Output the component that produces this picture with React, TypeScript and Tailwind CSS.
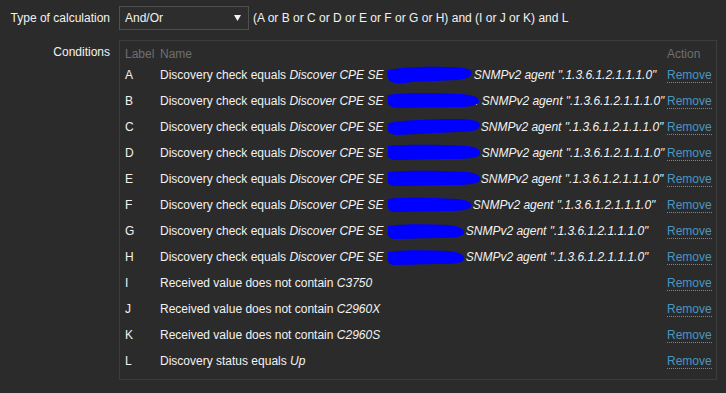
import React from "react";

type Row = {
  l: string;
  pre: string;
  it: string;
  blob?: { w: string; svgW: number; d: string };
  postIt?: string;
};

const blobA = "M1,5 C14,2 40,1 60,2 C72,2 82,3 84,6 C86,10 82,14 70,15 C55,16 40,16 25,17 C15,19 6,19 3,16 C0,13 0,8 1,5 Z";
const blobB = "M1,4 C20,1 50,2 75,3 C86,4 92,6 92,10 C92,14 84,16 70,16 C50,16 30,17 12,17 C4,17 0,14 1,10 C1,8 0,6 1,4 Z";
const blobC = "M2,6 C15,3 45,2 70,2 C85,2 93,4 93,8 C93,13 85,15 70,15 C50,16 30,17 10,18 C3,18 0,14 1,11 C1,9 1,7 2,6 Z";
const blobD = "M1,3 C25,1 55,2 80,3 C90,4 94,7 93,11 C92,15 82,16 65,16 C45,16 25,17 8,17 C3,17 0,14 1,10 Z";
const blobF = "M1,4 C18,2 45,3 70,4 C80,5 85,7 84,11 C83,15 74,16 60,16 C42,16 24,17 8,17 C2,17 0,13 1,9 Z";
const blobG = "M1,5 C15,3 40,3 62,4 C72,5 78,8 77,12 C76,16 68,17 55,17 C38,17 20,18 7,18 C2,18 0,14 1,10 Z";

const snmp = "SNMPv2 agent \".1.3.6.1.2.1.1.1.0\"";

const rows: Row[] = [
  { l: "A", pre: "Discovery check equals ", it: "Discover CPE SE ", blob: { w: "w-[87px]", svgW: 87, d: blobA }, postIt: snmp },
  { l: "B", pre: "Discovery check equals ", it: "Discover CPE SE ", blob: { w: "w-[85px]", svgW: 94, d: blobB }, postIt: ".. " + snmp },
  { l: "C", pre: "Discovery check equals ", it: "Discover CPE SE ", blob: { w: "w-[94px]", svgW: 94, d: blobC }, postIt: snmp },
  { l: "D", pre: "Discovery check equals ", it: "Discover CPE SE ", blob: { w: "w-[95px]", svgW: 95, d: blobD }, postIt: snmp },
  { l: "E", pre: "Discovery check equals ", it: "Discover CPE SE ", blob: { w: "w-[94px]", svgW: 94, d: blobD }, postIt: snmp },
  { l: "F", pre: "Discovery check equals ", it: "Discover CPE SE ", blob: { w: "w-[86px]", svgW: 86, d: blobF }, postIt: snmp },
  { l: "G", pre: "Discovery check equals ", it: "Discover CPE SE ", blob: { w: "w-[79px]", svgW: 79, d: blobG }, postIt: snmp },
  { l: "H", pre: "Discovery check equals ", it: "Discover CPE SE ", blob: { w: "w-[79px]", svgW: 79, d: blobG }, postIt: snmp },
  { l: "I", pre: "Received value does not contain ", it: "C3750" },
  { l: "J", pre: "Received value does not contain ", it: "C2960X" },
  { l: "K", pre: "Received value does not contain ", it: "C2960S" },
  { l: "L", pre: "Discovery status equals ", it: "Up" },
];

function Blob({ w, svgW, d }: { w: string; svgW: number; d: string }) {
  return (
    <span className={`relative inline-block h-[12px] align-middle ${w}`}>
      <svg
        className="absolute left-0 top-[-5px]"
        width={svgW}
        height={20}
        viewBox={`0 0 ${svgW} 20`}
      >
        <path d={d} fill="#0000ff" />
      </svg>
    </span>
  );
}

export default function App() {
  return (
    <div
      className="w-[726px] h-[393px] bg-[#2b2b2b] text-[#f2f2f2] text-[12px] overflow-hidden"
      style={{ fontFamily: '"Liberation Sans", Arial, sans-serif' }}
    >
      <div className="pt-[6px] flex items-center">
        <div className="w-[110px] text-right leading-[14px]">Type of calculation</div>
        <div className="ml-[9px] w-[130px] h-[24px] border border-[#4f4f4f] bg-[#2d2d2d] flex items-center justify-between pl-[5px] pr-[7px]">
          <span>And/Or</span>
          <svg width="7" height="6" viewBox="0 0 7 6">
            <path d="M0,0 L7,0 L3.5,6 Z" fill="#f2f2f2" />
          </svg>
        </div>
        <div className="ml-[4px] leading-[14px]">
          (A or B or C or D or E or F or G or H) and (I or J or K) and L
        </div>
      </div>

      <div className="mt-[10px] flex items-start">
        <div className="w-[110px] text-right leading-[14px] mt-[5px]">Conditions</div>
        <div className="ml-[9px] w-[598px] border border-[#3c3c3c] pt-[5px] pb-[5px] pl-[5px] pr-[4px]">
          <div className="grid grid-cols-[35px_1fr_45px] h-[16px] items-center text-[#6f6f6f] leading-[14px]">
            <div>Label</div>
            <div>Name</div>
            <div>Action</div>
          </div>
          {rows.map((r) => (
            <div
              key={r.l}
              className="grid grid-cols-[35px_1fr_45px] h-[26px] items-center leading-[14px]"
            >
              <div>{r.l}</div>
              <div className="whitespace-pre overflow-visible">
                {r.pre}
                <i>{r.it}</i>
                {r.blob && <Blob {...r.blob} />}
                {r.postIt && <i>{r.postIt}</i>}
              </div>
              <div>
                <span className="text-[#4796c4] border-b border-dotted border-[#4796c4] cursor-pointer">
                  Remove
                </span>
              </div>
            </div>
          ))}
        </div>
      </div>
    </div>
  );
}
